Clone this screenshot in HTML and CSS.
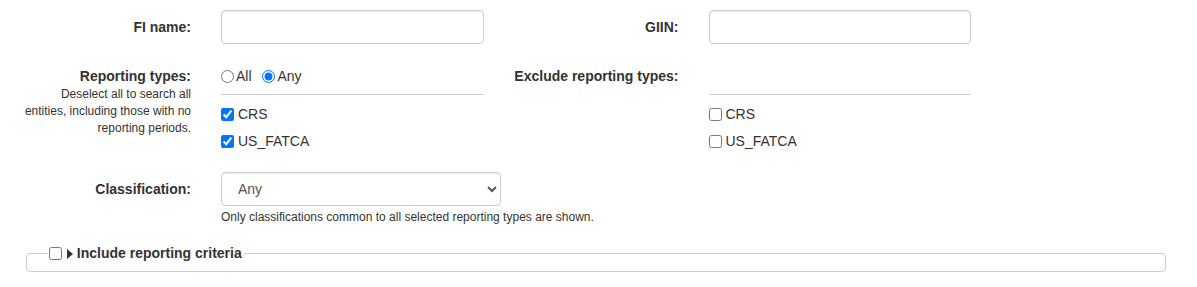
FILE: index.html
```html
<!DOCTYPE html>
<html lang="en">
<head>
  <meta charset="UTF-8" />
  <meta name="viewport" content="width=device-width, initial-scale=1.0" />
  <title>FI Search</title>
  <link rel="stylesheet" href="styles.css">
</head>

<body>
  <div class="page">
    <form class="search-form">

      <!-- NAME / GIIN -->
      <div class="form-row">
        <label class="col-label" for="fiName">FI name:</label>
        <div class="col-field"><input type="text" id="fiName" class="text-input"></div>
        <label class="col-label" for="giin">GIIN:</label>
        <div class="col-field"><input type="text" id="giin" class="text-input"></div>
      </div>

      <!-- REPORTING TYPES -->
      <div class="form-row types-row">
        <div class="col-label">
          <label>Reporting types:</label>
          <p class="label-help">Deselect all to search all entities, including those with no reporting periods.</p>
        </div>
        <div class="col-field">
          <div class="radio-line">
            <label class="radio-inline"><input type="radio" name="match">All</label>
            <label class="radio-inline"><input type="radio" name="match" checked>Any</label>
          </div>
          <hr class="divider">
          <label class="check-line"><input type="checkbox" checked>CRS</label>
          <label class="check-line"><input type="checkbox" checked>US_FATCA</label>
        </div>
        <div class="col-label">
          <label>Exclude reporting types:</label>
        </div>
        <div class="col-field">
          <div class="radio-line"></div>
          <hr class="divider">
          <label class="check-line"><input type="checkbox">CRS</label>
          <label class="check-line"><input type="checkbox">US_FATCA</label>
        </div>
      </div>

      <!-- CLASSIFICATION -->
      <div class="form-row">
        <label class="col-label" for="classification">Classification:</label>
        <div class="col-wide">
          <select id="classification" class="select-input">
            <option>Any</option>
          </select>
          <p class="help-block">Only classifications common to all selected reporting types are shown.</p>
        </div>
      </div>

      <!-- REPORTING CRITERIA -->
      <fieldset class="criteria">
        <legend>
          <input type="checkbox">
          <span class="caret"></span>
          Include reporting criteria
        </legend>
      </fieldset>

    </form>
  </div>
</body>
</html>
```

FILE: styles.css
```css
body {
  margin: 0;
  font-family: "Liberation Sans", Arial, sans-serif;
  font-size: 14px;
  line-height: 20px;
  color: #333;
  background: #fff;
}

.page {
  width: 1170px;
  margin: 10px 0 0 11px;
}

/* ROWS */
.form-row {
  display: flex;
  align-items: flex-start;
  margin-bottom: 15px;
}

.col-label {
  width: 195px;
  box-sizing: border-box;
  padding: 7px 15px 0;
  text-align: right;
  font-weight: bold;
}

.col-field {
  width: 292.5px;
  box-sizing: border-box;
  padding: 0 15px;
}

.col-wide {
  width: 600px;
  box-sizing: border-box;
  padding: 0 15px;
}

/* INPUTS */
.text-input,
.select-input {
  display: block;
  box-sizing: border-box;
  width: 100%;
  height: 34px;
  padding: 6px 12px;
  font: inherit;
  color: #555;
  background: #fff;
  border: 1px solid #ccc;
  border-radius: 4px;
  box-shadow: inset 0 1px 1px rgba(0, 0, 0, 0.075);
}

.select-input {
  width: 280px;
}

.help-block {
  margin: 3px 0 0;
  font-size: 12px;
  line-height: 17px;
  color: #333;
}

/* REPORTING TYPES */
.types-row {
  margin-bottom: 14px;
}

.label-help {
  margin: 0 0 0 -5px;
  font-size: 12px;
  line-height: 17px;
  font-weight: normal;
}

.radio-line {
  height: 20px;
  padding-top: 7px;
}

.radio-inline {
  margin-right: 7px;
}

.radio-inline input {
  margin: 0 2px 0 0;
  vertical-align: -2px;
}

.divider {
  margin: 8px 0 9px;
  border: 0;
  border-top: 1px solid #ccc;
}

.check-line {
  display: block;
  height: 27px;
}

.check-line input {
  margin: 0 4px 0 0;
  vertical-align: -2px;
}

/* FIELDSET */
.criteria {
  margin: 17px 15px 0;
  padding: 0 10px 8px 21px;
  border: 1px solid #ccc;
  border-radius: 4px;
}

.criteria legend {
  padding: 0 2px 0 1px;
  font-weight: bold;
}

.criteria legend input {
  margin: 0 1px 0 0;
  vertical-align: -2px;
}

.caret {
  display: inline-block;
  width: 0;
  height: 0;
  border-top: 5px solid transparent;
  border-bottom: 5px solid transparent;
  border-left: 6px solid #333;
  vertical-align: -1px;
}
```
